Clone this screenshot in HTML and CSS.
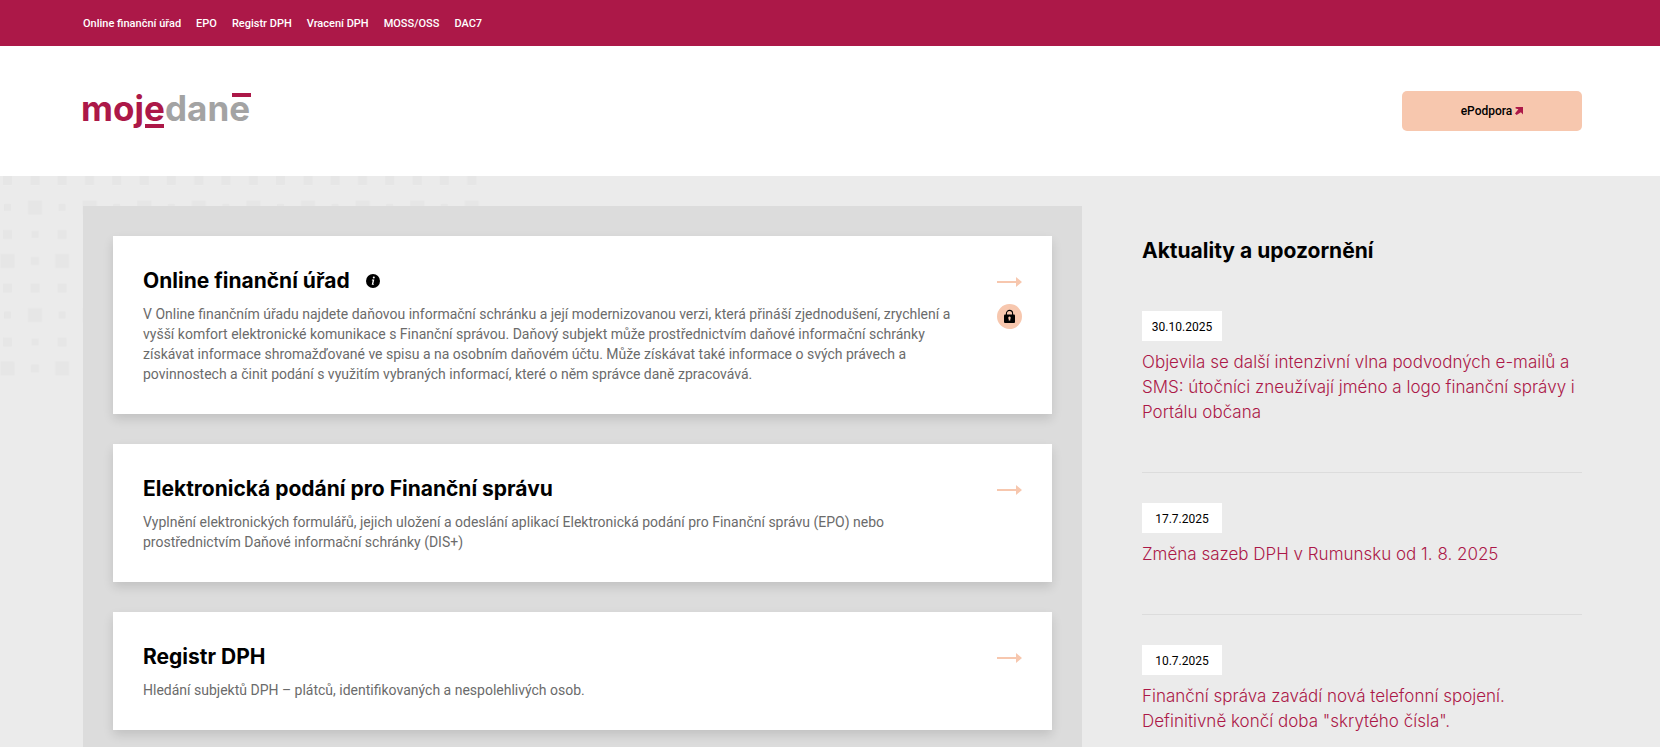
FILE: index.html
```html
<!DOCTYPE html>
<html lang="cs">
<head>
  <meta charset="UTF-8">
  <title>MOJE daně</title>
  <meta name="viewport" content="width=device-width, initial-scale=1">
  <link rel="stylesheet" href="styles.css">
</head>
<body>
  <nav class="topbar">
    <a href="#">Online finanční úřad</a>
    <a href="#">EPO</a>
    <a href="#">Registr DPH</a>
    <a href="#">Vracení DPH</a>
    <a href="#">MOSS/OSS</a>
    <a href="#">DAC7</a>
  </nav>

  <header class="header">
    <a class="logo" href="#" aria-label="moje daně">
      <svg width="174" height="38" viewBox="-4 0 174 38">
        <text class="logo-moje" x="-2" y="29">moje</text>
        <text class="logo-dane" x="82" y="29">dane</text>
        <rect x="62" y="32" width="19" height="4" fill="#ac1848"/>
        <rect x="149" y="1" width="19" height="4" fill="#ac1848"/>
      </svg>
    </a>
    <button class="support-btn" type="button">
      ePodpora
      <svg width="8" height="8" viewBox="0 0 8 8" fill="#ac1848">
        <path d="M.6 0H8V7.4L5.9 5.2L1.6 8L0 6.6L3.4 2.2L.6 1.6Z"/>
      </svg>
    </button>
  </header>

  <main class="main">
    <svg class="dots" width="480" height="200" aria-hidden="true">
      <defs>
        <pattern id="squares" width="54.6" height="107.6" patternUnits="userSpaceOnUse">
          <g fill="#e6e6e6">
            <rect x="3" y="0" width="9" height="9"/>
            <rect x="30.5" y="0" width="9" height="9"/>
            <rect x="4" y="28" width="7" height="7"/>
            <rect x="28" y="24.5" width="14" height="14"/>
            <rect x="3" y="54" width="9" height="9"/>
            <rect x="31.5" y="55" width="7" height="7"/>
            <rect x="0.5" y="78" width="14" height="14"/>
            <rect x="31" y="81" width="8" height="8"/>
          </g>
        </pattern>
      </defs>
      <rect width="480" height="200" fill="url(#squares)"/>
    </svg>

    <section class="panel">
      <article class="card">
        <div class="card-body">
          <h2 class="title">
            <a href="#">Online finanční úřad</a>
            <svg class="info" width="14" height="14" viewBox="0 0 14 14">
              <circle cx="7" cy="7" r="7" fill="#000"/>
              <circle cx="7.8" cy="3.6" r="1" fill="#fff"/>
              <path d="M6 5.6H8.3L7.3 9.9H8L7.7 10.8H5.7L6.7 6.5H5.8Z" fill="#fff"/>
            </svg>
          </h2>
          <p class="desc">V Online finančním úřadu najdete daňovou informační schránku a její modernizovanou verzi, která přináší zjednodušení, zrychlení a vyšší komfort elektronické komunikace s Finanční správou. Daňový subjekt může prostřednictvím daňové informační schránky získávat informace shromažďované ve spisu a na osobním daňovém účtu. Může získávat také informace o svých právech a povinnostech a činit podání s využitím vybraných informací, které o něm správce daně zpracovává.</p>
        </div>
        <div class="card-icons">
          <svg width="25" height="10" viewBox="0 0 25 10" fill="#f7c7ae">
            <path d="M0 4H19V0L25 5L19 10V6H0Z"/>
          </svg>
          <svg width="25" height="25" viewBox="0 0 25 25">
            <circle cx="12.5" cy="12.5" r="12.5" fill="#f7c7ae"/>
            <path d="M9.4 11V9.5A3.1 3.1 0 0 1 15.6 9.5V11" fill="none" stroke="#000" stroke-width="1.1"/>
            <rect x="7" y="10.6" width="11" height="8.4" rx="1" fill="#000"/>
            <path d="M12.5 12.6a1.3 1.3 0 0 1 .8 2.3v1.6h-1.6v-1.6a1.3 1.3 0 0 1 .8-2.3z" fill="#f7c7ae"/>
          </svg>
        </div>
      </article>

      <article class="card">
        <div class="card-body">
          <h2 class="title"><a href="#">Elektronická podání pro Finanční správu</a></h2>
          <p class="desc">Vyplnění elektronických formulářů, jejich uložení a odeslání aplikací Elektronická podání pro Finanční správu (EPO) nebo prostřednictvím Daňové informační schránky (DIS+)</p>
        </div>
        <div class="card-icons">
          <svg width="25" height="10" viewBox="0 0 25 10" fill="#f7c7ae">
            <path d="M0 4H19V0L25 5L19 10V6H0Z"/>
          </svg>
        </div>
      </article>

      <article class="card">
        <div class="card-body">
          <h2 class="title"><a href="#">Registr DPH</a></h2>
          <p class="desc">Hledání subjektů DPH – plátců, identifikovaných a nespolehlivých osob.</p>
        </div>
        <div class="card-icons">
          <svg width="25" height="10" viewBox="0 0 25 10" fill="#f7c7ae">
            <path d="M0 4H19V0L25 5L19 10V6H0Z"/>
          </svg>
        </div>
      </article>
    </section>

    <aside class="news">
      <h2 class="title">Aktuality a upozornění</h2>
      <article class="news-item">
        <time class="news-date" datetime="2025-10-30">30.10.2025</time>
        <a class="news-link" href="#">Objevila se další intenzivní vlna podvodných e-mailů a SMS: útočníci zneužívají jméno a logo finanční správy i Portálu občana</a>
      </article>
      <article class="news-item">
        <time class="news-date" datetime="2025-07-17">17.7.2025</time>
        <a class="news-link" href="#">Změna sazeb DPH v Rumunsku od 1. 8. 2025</a>
      </article>
      <article class="news-item">
        <time class="news-date" datetime="2025-07-10">10.7.2025</time>
        <a class="news-link" href="#">Finanční správa zavádí nová telefonní spojení. Definitivně končí doba "skrytého čísla".</a>
      </article>
    </aside>
  </main>
</body>
</html>
```
FILE: styles.css
```css
* {
  box-sizing: border-box;
}

body {
  margin: 0;
  background: #ebebeb;
  color: #000;
  font-family: Roboto, sans-serif;
  font-size: 14px;
  line-height: 20px;
}

a {
  color: inherit;
  text-decoration: none;
}

svg {
  display: block;
  flex-shrink: 0;
}

/* horní lišta */
.topbar {
  display: flex;
  gap: 15px;
  padding: 14px 78px 12px 83px;
  background: #ac1848;
  color: #fff;
  font-size: 11px;
  font-weight: 500;
}

/* hlavička */
.header {
  display: flex;
  justify-content: space-between;
  align-items: center;
  padding: 45px 78px 45px 83px;
  background: #fff;
}

.logo svg {
  margin-left: -4px;
  overflow: visible;
}

.logo-moje,
.logo-dane {
  font-family: Inter, sans-serif;
  font-size: 35px;
  font-weight: 700;
}

.logo-moje {
  fill: #ac1848;
}

.logo-dane {
  fill: #a3a3a3;
}

.support-btn {
  display: flex;
  justify-content: center;
  align-items: center;
  gap: 3px;
  width: 180px;
  height: 40px;
  border: none;
  border-radius: 5px;
  background: #f7c7ae;
  color: #000;
  font-family: inherit;
  font-size: 12px;
  font-weight: 500;
  cursor: pointer;
}

/* obsah */
.main {
  position: relative;
  display: grid;
  grid-template-columns: 1fr 440px;
  column-gap: 60px;
  padding: 30px 78px 0 83px;
}

.dots {
  position: absolute;
  top: 0;
  left: 0;
}

.panel {
  position: relative;
  display: flex;
  flex-direction: column;
  gap: 30px;
  padding: 30px;
  background: #dcdcdc;
}

.card {
  display: flex;
  justify-content: space-between;
  gap: 32px;
  padding: 30px;
  background: #fff;
  box-shadow: 0 5px 10px rgba(0, 0, 0, 0.12);
}

.title {
  display: flex;
  align-items: center;
  gap: 16px;
  margin: 0;
  font-family: Inter, sans-serif;
  font-size: 21px;
  font-weight: 700;
  line-height: 30px;
}

.desc {
  margin: 8px 0 0;
  color: #6b6b6b;
}

.card-icons {
  display: flex;
  flex-direction: column;
  gap: 17px;
  padding-top: 11px;
}

/* aktuality */
.news {
  padding-top: 30px;
}

.news .title {
  margin-bottom: 45px;
}

.news-item {
  margin-bottom: 30px;
  padding-bottom: 47px;
  border-bottom: 1px solid #dcdcdc;
}

.news-date {
  display: block;
  width: 80px;
  margin-bottom: 9px;
  padding: 6px 0 4px;
  background: #fff;
  font-size: 12px;
  text-align: center;
}

.news-link {
  display: block;
  color: #ac1848;
  font-family: Inter, sans-serif;
  font-size: 17px;
  font-weight: 300;
  line-height: 25px;
}

@media (max-width: 1100px) {
  .main {
    grid-template-columns: 1fr;
  }
}
```
